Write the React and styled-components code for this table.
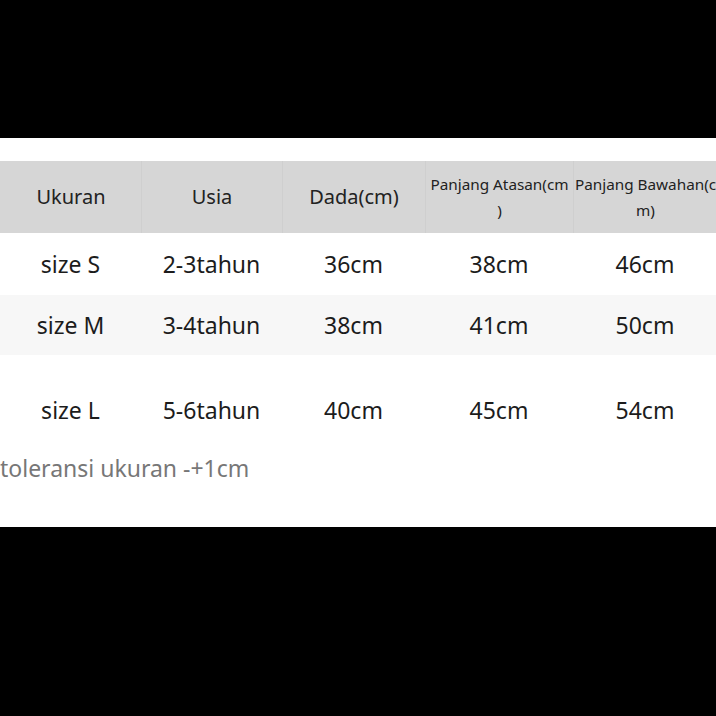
import { createGlobalStyle, styled } from "styled-components";

const GlobalStyle = createGlobalStyle`
    html, body {
        margin: 0;
        padding: 0;
        background: #000;
    }
    body {
        font-family: "Noto Sans", "Open Sans", sans-serif;
        overflow: hidden;
    }
`;

const Page = styled.div`
    width: 716px;
    height: 716px;
    padding-top: 138px;
    box-sizing: border-box;
`;

const Sheet = styled.div`
    background: #fff;
    height: 389px;
    padding-top: 23px;
    box-sizing: border-box;
`;

const Row = styled.div`
    display: grid;
    grid-template-columns: 141px 141px 143px 148px 144px;
    height: ${(p) => p.$height}px;
    background: ${(p) => p.$bg || "#fff"};
    align-items: ${(p) => p.$align || "center"};
`;

const HeadCell = styled.div`
    height: 100%;
    display: flex;
    align-items: center;
    justify-content: center;
    text-align: center;
    font-size: ${(p) => (p.$small ? "15.3px" : "20px")};
    line-height: ${(p) => (p.$small ? "26px" : "24px")};
    color: #222;
    padding: 0 ${(p) => p.$inset || 0}px;
    box-sizing: border-box;
    word-break: break-all;
    line-break: anywhere;
    border-left: 1px solid ${(p) => (p.$first ? "transparent" : "#cfcfcf")};
`;

const Cell = styled.div`
    text-align: center;
    font-size: 23px;
    line-height: 30px;
    color: #1c1c1c;
    padding-top: ${(p) => p.$pad || 0}px;
`;

const Note = styled.p`
    margin: 3px 0 0 0;
    font-size: 23px;
    line-height: 30px;
    color: #777;
`;

const headers = [
    { label: "Ukuran" },
    { label: "Usia" },
    { label: "Dada(cm)" },
    { label: "Panjang Atasan(cm)", small: true, inset: 3 },
    { label: "Panjang Bawahan(cm)", small: true },
];

const rows = [
    { cells: ["size S", "2-3tahun", "36cm", "38cm", "46cm"], height: 62 },
    { cells: ["size M", "3-4tahun", "38cm", "41cm", "50cm"], height: 60, bg: "#f7f7f7" },
    { cells: ["size L", "5-6tahun", "40cm", "45cm", "54cm"], height: 95, pad: 40 },
];

export default function App() {
    return (
        <Page>
            <GlobalStyle />
            <Sheet>
                <Row $height={72} $bg="#d6d6d6">
                    {headers.map((h, i) => (
                        <HeadCell
                            key={h.label}
                            $small={h.small}
                            $inset={h.inset}
                            $first={i === 0}
                        >
                            {h.label}
                        </HeadCell>
                    ))}
                </Row>
                {rows.map((r) => (
                    <Row
                        key={r.cells[0]}
                        $height={r.height}
                        $bg={r.bg}
                        $align={r.pad ? "start" : "center"}
                    >
                        {r.cells.map((c, i) => (
                            <Cell key={i} $pad={r.pad}>
                                {c}
                            </Cell>
                        ))}
                    </Row>
                ))}
                <Note>toleransi ukuran -+1cm</Note>
            </Sheet>
        </Page>
    );
}
